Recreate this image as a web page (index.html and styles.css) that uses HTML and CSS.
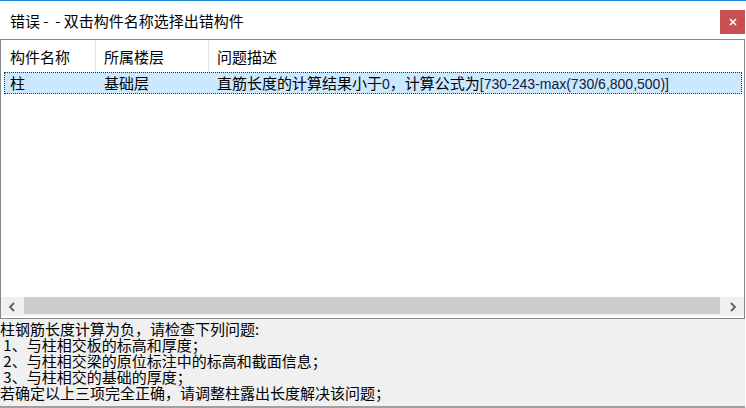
FILE: index.html
```html
<!DOCTYPE html>
<html lang="zh-CN">
<head>
<meta charset="utf-8">
<link rel="stylesheet" href="styles.css">
</head>
<body>
<div class="window">
  <div class="titlebar">
    <div class="title">错误 -&nbsp; - 双击构件名称选择出错构件</div>
    <div class="close"><svg width="10" height="10" viewBox="0 0 10 10"><path d="M2 2 L8 8 M8 2 L2 8" stroke="#fff" stroke-width="1.6"/></svg></div>
  </div>
  <div class="list">
    <div class="header">
      <div class="col c1">构件名称</div>
      <div class="col c2">所属楼层</div>
      <div class="col c3">问题描述</div>
    </div>
    <div class="row">
      <div class="col c1">柱</div>
      <div class="col c2">基础层</div>
      <div class="col c3">直筋长度的计算结果小于<span class="latin">0</span>，计算公式为<span class="latin">[730-243-max(730/6,800,500)]</span></div>
    </div>
    <div class="spacer"></div>
    <div class="hscroll">
      <div class="arrow"><svg width="8" height="10" viewBox="0 0 8 10"><path d="M6 1 L2 5 L6 9" fill="none" stroke="#606060" stroke-width="1.8"/></svg></div>
      <div class="thumb"></div>
      <div class="arrow"><svg width="8" height="10" viewBox="0 0 8 10"><path d="M2 1 L6 5 L2 9" fill="none" stroke="#606060" stroke-width="1.8"/></svg></div>
    </div>
  </div>
  <div class="info">
    <div class="line">柱钢筋长度计算为负，请检查下列问题:</div>
    <div class="line">&nbsp;1、与柱相交板的标高和厚度；</div>
    <div class="line">&nbsp;2、与柱相交梁的原位标注中的标高和截面信息；</div>
    <div class="line">&nbsp;3、与柱相交的基础的厚度；</div>
    <div class="line">若确定以上三项完全正确，请调整柱露出长度解决该问题；</div>
  </div>
</div>
</body>
</html>
```
FILE: styles.css
```css
html, body {
  margin: 0;
  padding: 0;
  background: #ffffff;
}
body {
  width: 746px;
  height: 408px;
  overflow: hidden;
  font-family: "Noto Sans CJK SC", "Noto Sans", sans-serif;
  color: #000;
}
.window {
  width: 746px;
  height: 408px;
  border-top: 1px solid #1883d7;
  box-sizing: border-box;
  display: flex;
  flex-direction: column;
}
.titlebar {
  height: 38px;
  display: flex;
  align-items: flex-start;
  justify-content: space-between;
  background: #fff;
}
.title {
  font-size: 15px;
  line-height: 20px;
  padding: 10px 0 0 10px;
  color: #000;
}
.close {
  width: 25px;
  height: 24px;
  margin-top: 9px;
  margin-right: 1px;
  background: #c75050;
  display: flex;
  align-items: center;
  justify-content: center;
}
.list {
  height: 280px;
  border: 1px solid #828790;
  box-sizing: border-box;
  margin-right: 1px;
  display: flex;
  flex-direction: column;
  background: #fff;
}
.header {
  height: 32px;
  display: flex;
  font-size: 15px;
  line-height: 34px;
}
.header .col {
  border-right: 1px solid #e5e5e5;
  box-sizing: border-box;
}
.col {
  padding-left: 9px;
  white-space: nowrap;
  box-sizing: border-box;
}
.c1 { width: 95px; }
.c2 { width: 113px; padding-left: 8px; }
.c3 { flex: 1; padding-left: 8px; }
.header .c3 { border-right: none; }
.row {
  height: 22px;
  margin: 0 2px 0 3px;
  display: flex;
  background: #cce8ff;
  outline: 1px dotted #333;
  outline-offset: -1px;
  font-size: 15px;
  line-height: 22px;
}
.row .c1 { width: 92px; padding-left: 6px; }
.row .c2 { width: 113px; }
.latin {
  font-family: "Liberation Sans", sans-serif;
  font-size: 14px;
  color: #10203a;
}
.spacer { flex: 1; }
.hscroll {
  height: 19px;
  margin-bottom: 2px;
  display: flex;
  background: #f0f0f0;
}
.arrow {
  width: 22px;
  display: flex;
  align-items: center;
  justify-content: center;
}
.thumb {
  flex: 1;
  background: #cdcdcd;
  margin: 0 2px 2px 1px;
}
.info {
  flex: 1;
  background: #f0f0f0;
  border-bottom: 2px solid #a0a0a0;
  font-size: 15px;
  padding-top: 2px;
  margin-right: 1px;
  white-space: nowrap;
}
.line {
  height: 16px;
  line-height: 16px;
}
```
